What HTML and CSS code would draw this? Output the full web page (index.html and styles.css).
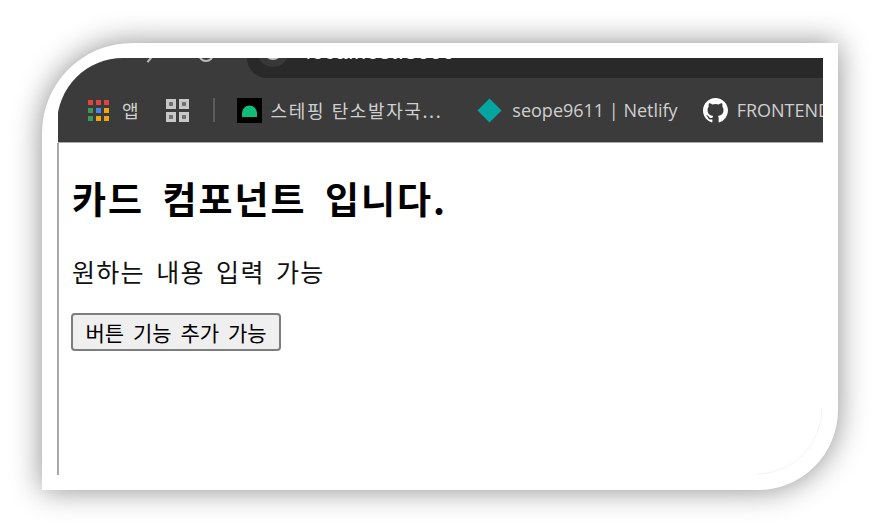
FILE: index.html
```html
<!DOCTYPE html>
<html lang="ko">
<head>
<meta charset="utf-8">
<title>카드 컴포넌트</title>
<link rel="stylesheet" href="styles.css">
</head>
<body>
<div class="frame">
  <div class="shot">
    <div class="chrome">
      <div class="nav-row">
        <span class="nav-arrow"></span>
        <span class="nav-dot"></span>
        <div class="omnibox">
          <span class="omni-halo"><span class="omni-dot"></span></span>
          <span class="url">localhost:3000</span>
        </div>
      </div>
      <div class="bookmarks">
        <svg class="apps" width="21" height="21" viewBox="0 0 21 21">
          <rect x="0" y="0" width="5" height="5" fill="#e0443c"/><rect x="8" y="0" width="5" height="5" fill="#e0443c"/><rect x="16" y="0" width="5" height="5" fill="#e0443c"/>
          <rect x="0" y="8" width="5" height="5" fill="#3a9a5a"/><rect x="8" y="8" width="5" height="5" fill="#3f8ae0"/><rect x="16" y="8" width="5" height="5" fill="#eda612"/>
          <rect x="0" y="16" width="5" height="5" fill="#3a9a5a"/><rect x="8" y="16" width="5" height="5" fill="#eda612"/><rect x="16" y="16" width="5" height="5" fill="#eda612"/>
        </svg>
        <span class="bm-text apps-label">앱</span>
        <svg class="tiles" width="23" height="23" viewBox="0 0 23 23">
          <g fill="#707070" stroke="#c8c8c8" stroke-width="3">
            <rect x="1.5" y="1.5" width="7" height="7"/><rect x="14.5" y="1.5" width="7" height="7"/>
            <rect x="1.5" y="14.5" width="7" height="7"/><rect x="14.5" y="14.5" width="7" height="7"/>
          </g>
        </svg>
        <span class="sep"></span>
        <svg class="favicon" width="25" height="25" viewBox="0 0 25 25">
          <rect width="25" height="25" fill="#000"/>
          <path d="M5 19v-4a7.500 7.500 0 0 1 15 0v4z" fill="#0fbf78"/>
        </svg>
        <span class="bm-text step">스테핑 탄소발자국...</span>
        <svg class="diamond" width="25" height="25" viewBox="0 0 25 25">
          <path d="M12.500 0.500 24.500 12.500 12.500 24.500 0.500 12.500z" fill="#05a6a0"/>
        </svg>
        <span class="bm-text netlify">seope9611 | Netlify</span>
        <svg class="github" width="25" height="25" viewBox="0 0 16 16">
          <path fill="#fff" d="M8 0C3.580 0 0 3.580 0 8c0 3.540 2.290 6.530 5.470 7.590.4.070.55-.17.55-.38 0-.19-.010-.82-.010-1.490-2.010.37-2.530-.49-2.690-.94-.090-.23-.48-.94-.82-1.130-.28-.15-.68-.52-.010-.53.630-.010 1.080.58 1.230.82.720 1.210 1.870.87 2.330.66.070-.52.280-.87.510-1.070-1.780-.2-3.640-.89-3.640-3.950 0-.87.310-1.590.82-2.150-.080-.2-.36-1.020.080-2.120 0 0 .67-.21 2.200.82a7.600 7.600 0 0 1 4 0c1.530-1.040 2.200-.82 2.200-.82.440 1.100.160 1.920.080 2.120.510.560.82 1.270.82 2.150 0 3.070-1.870 3.750-3.650 3.950.290.250.540.730.540 1.480 0 1.070-.010 1.930-.010 2.200 0 .21.150.46.550.38A8.010 8.010 0 0 0 16 8c0-4.420-3.580-8-8-8z"/>
        </svg>
        <span class="bm-text frontend">FRONTEND</span>
      </div>
    </div>
    <div class="page">
      <h1 class="title">카드 컴포넌트 입니다.</h1>
      <p class="desc">원하는 내용 입력 가능</p>
      <button class="action" type="button">버튼 기능 추가 가능</button>
    </div>
    <svg class="corner" width="66" height="67" viewBox="0 0 66 67">
      <path d="M65 0A65 66 0 0 1 0 66" fill="none" stroke="#f2f2f2" stroke-width="1"/>
    </svg>
  </div>
</div>
</body>
</html>
```
FILE: styles.css
```css
* { box-sizing: border-box; }
html, body { height: 100%; }
body {
  margin: 0;
  background: #fff;
  padding: 43px 42px 42px;
  font-family: "Noto Sans CJK KR", "Liberation Sans", sans-serif;
}
.frame {
  width: 796px;
  height: 447px;
  padding: 15px;
  background: #fff;
  border-radius: 90px 0 80px 0;
  box-shadow: 0 0 30px rgba(0, 0, 0, 0.45);
}
.shot {
  position: relative;
  height: 417px;
  background: #fff;
  border-radius: 66px 0 66px 0;
  overflow: hidden;
}
.corner {
  position: absolute;
  right: 0;
  bottom: 0;
}
.chrome {
  height: 85px;
  margin-left: 1px;
  background: #3b3b3b;
  border-bottom: 1px solid #a9a9a9;
  overflow: hidden;
}
.nav-row {
  height: 20px;
  display: flex;
  align-items: flex-end;
  padding-left: 88px;
}
.nav-arrow {
  width: 6px;
  height: 3px;
  margin-bottom: 17px;
  border-bottom: 2px solid #bdbdbd;
  transform: rotate(-50deg);
}
.nav-dot {
  width: 16px;
  height: 16px;
  margin: 0 0 16px 46px;
  border: 2px solid #bdbdbd;
  border-radius: 50%;
  flex: none;
}
.omnibox {
  margin-left: 33px;
  flex: 1;
  height: 40px;
  background: #292929;
  border-radius: 20px 0 0 20px;
  display: flex;
  align-items: flex-start;
  padding-left: 10px;
  margin-top: -20px;
  align-self: flex-start;
}
.omni-halo {
  width: 32px;
  height: 32px;
  margin-top: -3px;
  border-radius: 50%;
  background: #383838;
  display: flex;
  align-items: center;
  justify-content: center;
  flex: none;
}
.omni-dot {
  width: 18px;
  height: 18px;
  border: 2px solid #c4c4c4;
  border-radius: 50%;
}
.url {
  margin: -2px 0 0 17px;
  color: #f0f0f0;
  font: 21px/32px "Liberation Sans", sans-serif;
  letter-spacing: 1px;
}
.bookmarks {
  height: 64px;
  display: flex;
  align-items: center;
  padding-left: 30px;
  white-space: nowrap;
}
.bm-text {
  color: #cfcfcf;
  font-size: 18px;
  line-height: 24px;
}
.apps { flex: none; }
.apps-label { margin-left: 13px; }
.tiles { margin-left: 27px; flex: none; }
.sep {
  width: 2px;
  height: 24px;
  margin-left: 24px;
  background: #5c5c5c;
  flex: none;
}
.favicon { margin-left: 22px; flex: none; }
.step { margin-left: 9px; letter-spacing: 1.6px; }
.diamond { margin-left: 35px; flex: none; }
.netlify { margin-left: 10px; font-family: "Open Sans", "Liberation Sans", sans-serif; }
.github { margin-left: 25px; flex: none; }
.frontend { margin-left: 9px; font-family: "Open Sans", "Liberation Sans", sans-serif; }
.page {
  height: 332px;
  border-left: 2px solid #a8a8a8;
  padding: 33px 0 0 13px;
}
.title {
  margin: 0;
  font-size: 37px;
  line-height: 44px;
  font-weight: 700;
  letter-spacing: 2px;
  word-spacing: 6px;
  color: #000;
}
.desc {
  margin: 33px 0 0;
  font-size: 25px;
  line-height: 36px;
  letter-spacing: 1.3px;
  word-spacing: 3px;
  color: #111;
}
.action {
  display: block;
  margin: 24px 0 0 -1px;
  width: 210px;
  height: 38px;
  padding: 0;
  background: #efefef;
  border: 2px solid #7d7d7d;
  border-radius: 4px;
  font-family: inherit;
  font-size: 21px;
  line-height: 30px;
  word-spacing: 3px;
  color: #000;
}
```
